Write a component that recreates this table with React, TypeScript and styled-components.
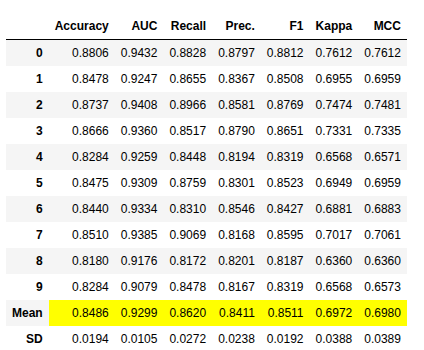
import React from 'react';
import styled, { createGlobalStyle } from 'styled-components';

const GlobalStyle = createGlobalStyle`
    body {
        margin: 0;
        background: #ffffff;
        font-family: 'Liberation Sans', Arial, sans-serif;
    }
`;

const Page = styled.div`
    padding: 13px 0 0 6px;
`;

const Table = styled.table`
    border: none;
    border-collapse: collapse;
    border-spacing: 0;
    color: black;
    font-size: 12px;
    table-layout: fixed;
`;

const Head = styled.thead`
    border-bottom: 1px solid black;
`;

const Row = styled.tr`
    &:nth-child(odd) {
        background: #f5f5f5;
    }
`;

const HeadCell = styled.th`
    text-align: right;
    vertical-align: middle;
    padding: 0.5em 0.5em;
    line-height: normal;
    font-weight: bold;
    white-space: nowrap;
`;

const Cell = styled.td<{ $highlight?: boolean }>`
    text-align: right;
    vertical-align: middle;
    padding: 0.5em 0.5em;
    line-height: normal;
    white-space: nowrap;
    background: ${(p) => (p.$highlight ? 'yellow' : 'transparent')};
`;

const columns = ['Accuracy', 'AUC', 'Recall', 'Prec.', 'F1', 'Kappa', 'MCC'];

const rows: [string, string[]][] = [
    ['0', ['0.8806', '0.9432', '0.8828', '0.8797', '0.8812', '0.7612', '0.7612']],
    ['1', ['0.8478', '0.9247', '0.8655', '0.8367', '0.8508', '0.6955', '0.6959']],
    ['2', ['0.8737', '0.9408', '0.8966', '0.8581', '0.8769', '0.7474', '0.7481']],
    ['3', ['0.8666', '0.9360', '0.8517', '0.8790', '0.8651', '0.7331', '0.7335']],
    ['4', ['0.8284', '0.9259', '0.8448', '0.8194', '0.8319', '0.6568', '0.6571']],
    ['5', ['0.8475', '0.9309', '0.8759', '0.8301', '0.8523', '0.6949', '0.6959']],
    ['6', ['0.8440', '0.9334', '0.8310', '0.8546', '0.8427', '0.6881', '0.6883']],
    ['7', ['0.8510', '0.9385', '0.9069', '0.8168', '0.8595', '0.7017', '0.7061']],
    ['8', ['0.8180', '0.9176', '0.8172', '0.8201', '0.8187', '0.6360', '0.6360']],
    ['9', ['0.8284', '0.9079', '0.8478', '0.8167', '0.8319', '0.6568', '0.6573']],
    ['Mean', ['0.8486', '0.9299', '0.8620', '0.8411', '0.8511', '0.6972', '0.6980']],
    ['SD', ['0.0194', '0.0105', '0.0272', '0.0238', '0.0192', '0.0388', '0.0389']],
];

const App = () => {
    return (
        <Page>
            <GlobalStyle />
            <Table>
                <Head>
                    <tr>
                        <HeadCell></HeadCell>
                        {columns.map((c) => (
                            <HeadCell key={c}>{c}</HeadCell>
                        ))}
                    </tr>
                </Head>
                <tbody>
                    {rows.map(([label, values]) => (
                        <Row key={label}>
                            <HeadCell>{label}</HeadCell>
                            {values.map((v, i) => (
                                <Cell key={i} $highlight={label === 'Mean'}>
                                    {v}
                                </Cell>
                            ))}
                        </Row>
                    ))}
                </tbody>
            </Table>
        </Page>
    );
};

export default App;
